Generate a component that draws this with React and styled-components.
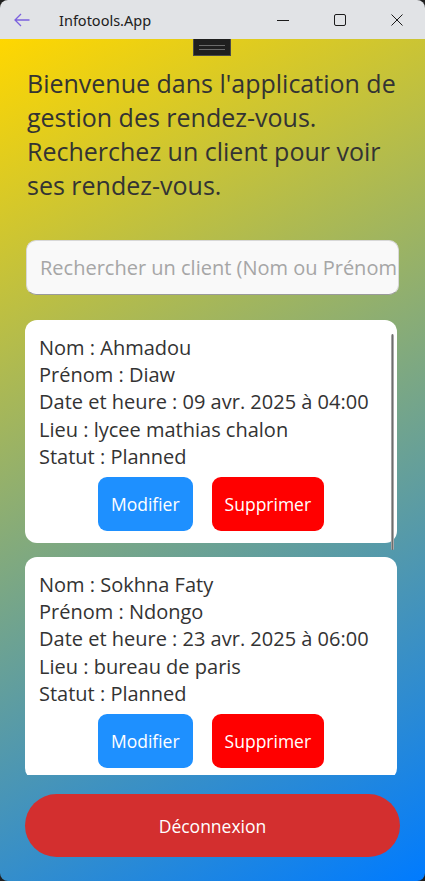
import React from 'react';
import styled, { createGlobalStyle } from 'styled-components';

const GlobalStyle = createGlobalStyle`
  html, body {
    margin: 0;
    padding: 0;
    background: #202020;
  }
  * {
    box-sizing: border-box;
  }
`;

const Window = styled.div`
  width: 425px;
  height: 881px;
  display: flex;
  flex-direction: column;
  border-radius: 8px;
  overflow: hidden;
  font-family: 'Open Sans', 'Noto Sans', sans-serif;
`;

const TitleBar = styled.div`
  height: 39px;
  flex-shrink: 0;
  display: flex;
  align-items: center;
  background: #e1e3e6;
  color: #1b1b1b;
`;

const BackButton = styled.div`
  width: 44px;
  display: flex;
  justify-content: center;
  color: #7b61de;
`;

const AppTitle = styled.div`
  flex: 1;
  margin-left: 15px;
  font-size: 14.5px;
  font-family: 'Noto Sans', 'Open Sans', sans-serif;
  color: #202020;
`;

const CaptionButton = styled.div`
  width: 57px;
  height: 39px;
  display: flex;
  align-items: center;
  justify-content: center;
  color: #1b1b1b;
`;

const Content = styled.main`
  position: relative;
  flex: 1;
  min-height: 0;
  display: flex;
  flex-direction: column;
  padding: 27px 26px 24px 26px;
  background: linear-gradient(153deg, #ffd700, #007bff);
`;

const DragHandle = styled.div`
  position: absolute;
  top: 0;
  left: 193px;
  width: 38px;
  height: 17px;
  background: #1f1f1f;
  border: 1px solid #4a4a4a;
  border-top: none;
  display: flex;
  align-items: center;
  justify-content: center;

  &::before {
    content: '';
    width: 26px;
    height: 3px;
    border-top: 1px solid #6a6a6a;
    border-bottom: 1px solid #6a6a6a;
  }
`;

const Heading = styled.h1`
  margin: 0 0 38px 0;
  padding-left: 1px;
  font-size: 25px;
  line-height: 34px;
  font-weight: 400;
  color: #333333;
`;

const SearchBox = styled.input`
  height: 55px;
  width: 100%;
  flex-shrink: 0;
  padding: 0 1px 0 13px;
  border: 1px solid #d8d8d8;
  border-bottom: 1px solid #9a9a9a;
  border-radius: 10px;
  background: #f9f9f9;
  font-family: 'Open Sans', 'Noto Sans', sans-serif;
  font-size: 20px;
  color: #222;
  outline: none;

  &::placeholder {
    color: #a6a6a6;
  }
`;

const ListArea = styled.div`
  position: relative;
  flex: 1;
  min-height: 0;
  margin: 25px 2px 19px -1px;
  overflow: hidden;
  display: flex;
  flex-direction: column;
  gap: 14px;
`;

const ScrollThumb = styled.div`
  position: absolute;
  top: 14px;
  right: 3px;
  width: 3px;
  height: 216px;
  border-radius: 2px;
  background: linear-gradient(to right, #bdbdbd, #6e6e6e 50%, #c8c8c8);
`;

const Card = styled.article`
  flex-shrink: 0;
  padding: 14px 14px 12px 14px;
  background: #ffffff;
  border-radius: 12px;
  color: #333333;
`;

const Field = styled.div`
  font-size: 20px;
  line-height: 27.2px;
  white-space: nowrap;
`;

const Actions = styled.div`
  display: flex;
  justify-content: center;
  gap: 19px;
  margin-top: 7px;
`;

const ActionButton = styled.button`
  height: 54px;
  padding: 0 13px;
  border: none;
  border-radius: 9px;
  background: ${p => (p.$danger ? '#ff0000' : '#1e90ff')};
  color: #ffffff;
  font-family: 'Open Sans', 'Noto Sans', sans-serif;
  font-size: 17.5px;
`;

const LogoutButton = styled.button`
  height: 63px;
  flex-shrink: 0;
  width: calc(100% + 2px);
  margin-left: -1px;
  border: none;
  border-radius: 32px;
  background: #d32f2f;
  color: #ffffff;
  font-family: 'Open Sans', 'Noto Sans', sans-serif;
  font-size: 17.5px;
`;

const rendezVous = [
  {
    nom: 'Ahmadou',
    prenom: 'Diaw',
    date: '09 avr. 2025 à 04:00',
    lieu: 'lycee mathias chalon',
    statut: 'Planned',
  },
  {
    nom: 'Sokhna Faty',
    prenom: 'Ndongo',
    date: '23 avr. 2025 à 06:00',
    lieu: 'bureau de paris',
    statut: 'Planned',
  },
];

const App = () => {
  return (
    <Window>
      <GlobalStyle />
      <TitleBar>
        <BackButton>
          <svg width="16" height="14" viewBox="0 0 16 14" fill="none" stroke="currentColor" strokeWidth="1.3">
            <path d="M15.5 7H1.2M7 1L1 7l6 6" />
          </svg>
        </BackButton>
        <AppTitle>Infotools.App</AppTitle>
        <CaptionButton>
          <svg width="12" height="12" viewBox="0 0 12 12" stroke="currentColor" strokeWidth="1">
            <path d="M0 6.5h12" />
          </svg>
        </CaptionButton>
        <CaptionButton>
          <svg width="12" height="12" viewBox="0 0 12 12" fill="none" stroke="currentColor" strokeWidth="1">
            <rect x="0.5" y="0.5" width="11" height="11" rx="1.5" />
          </svg>
        </CaptionButton>
        <CaptionButton>
          <svg width="12" height="12" viewBox="0 0 12 12" stroke="currentColor" strokeWidth="1">
            <path d="M0.5 0.5l11 11M11.5 0.5l-11 11" />
          </svg>
        </CaptionButton>
      </TitleBar>
      <Content>
        <DragHandle />
        <Heading>
          Bienvenue dans l'application de gestion des rendez-vous. Recherchez un client pour voir ses rendez-vous.
        </Heading>
        <SearchBox placeholder="Rechercher un client (Nom ou Prénom)" />
        <ListArea>
          {rendezVous.map((rdv, i) => (
            <Card key={i}>
              <Field>Nom : {rdv.nom}</Field>
              <Field>Prénom : {rdv.prenom}</Field>
              <Field>Date et heure : {rdv.date}</Field>
              <Field>Lieu : {rdv.lieu}</Field>
              <Field>Statut : {rdv.statut}</Field>
              <Actions>
                <ActionButton>Modifier</ActionButton>
                <ActionButton $danger>Supprimer</ActionButton>
              </Actions>
            </Card>
          ))}
          <ScrollThumb />
        </ListArea>
        <LogoutButton>Déconnexion</LogoutButton>
      </Content>
    </Window>
  );
};

export default App;
